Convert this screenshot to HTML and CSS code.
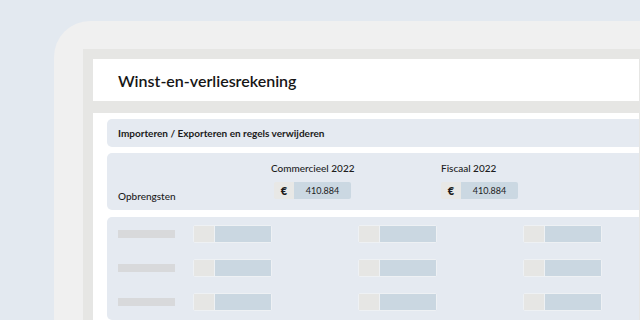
FILE: index.html
```html
<!DOCTYPE html>
<html lang="nl">
<head>
<meta charset="utf-8">
<link rel="stylesheet" href="styles.css">
</head>
<body>
<div class="device">
  <div class="screen">
    <div class="header"><h1 class="title">Winst-en-verliesrekening</h1></div>
    <div class="content">
      <div class="panel panel-bar">Importeren / Exporteren en regels verwijderen</div>
      <div class="panel panel-values">
        <div class="label">Opbrengsten</div>
        <div class="col col-1">
          <div class="col-head">Commercieel 2022</div>
          <div class="money"><span class="cur">€</span><span class="val">410.884</span></div>
        </div>
        <div class="col col-2">
          <div class="col-head">Fiscaal 2022</div>
          <div class="money"><span class="cur">€</span><span class="val">410.884</span></div>
        </div>
      </div>
      <div class="panel panel-skeleton">
        <div class="sk-row">
          <div class="sk-label"></div>
          <div class="sk-input"><span class="sk-cur"></span><span class="sk-val"></span></div>
          <div class="sk-input"><span class="sk-cur"></span><span class="sk-val"></span></div>
          <div class="sk-input"><span class="sk-cur"></span><span class="sk-val"></span></div>
        </div>
        <div class="sk-row">
          <div class="sk-label"></div>
          <div class="sk-input"><span class="sk-cur"></span><span class="sk-val"></span></div>
          <div class="sk-input"><span class="sk-cur"></span><span class="sk-val"></span></div>
          <div class="sk-input"><span class="sk-cur"></span><span class="sk-val"></span></div>
        </div>
        <div class="sk-row">
          <div class="sk-label"></div>
          <div class="sk-input"><span class="sk-cur"></span><span class="sk-val"></span></div>
          <div class="sk-input"><span class="sk-cur"></span><span class="sk-val"></span></div>
          <div class="sk-input"><span class="sk-cur"></span><span class="sk-val"></span></div>
        </div>
      </div>
    </div>
  </div>
</div>
</body>
</html>
```
FILE: styles.css
```css
html, body {
  margin: 0;
  padding: 0;
  width: 640px;
  height: 320px;
  overflow: hidden;
  background: #e3e9f0;
  font-family: "Lato", "Open Sans", sans-serif;
  color: #1c1c1c;
}

.device {
  margin: 21px 0 0 54px;
  height: 299px;
  background: #f0f0f0;
  border-top-left-radius: 36px;
  padding: 28px 0 0 29px;
  box-sizing: border-box;
}

.screen {
  height: 100%;
  background: #e6e6e4;
  padding: 10px 1px 0 10px;
  box-sizing: border-box;
  display: flex;
  flex-direction: column;
  gap: 12px;
}

.header {
  height: 42px;
  background: #ffffff;
  display: flex;
  align-items: center;
  padding-left: 25px;
}

.title {
  margin: 0;
  font-size: 16px;
  font-weight: 600;
  color: #161616;
}

.content {
  flex: 1;
  background: #ffffff;
  padding: 6px 0 0 14px;
  display: flex;
  flex-direction: column;
  gap: 6px;
}

.panel {
  background: #e5eaf1;
  border-radius: 5px 0 0 5px;
}

.panel-bar {
  height: 28px;
  display: flex;
  align-items: center;
  padding-left: 11px;
  font-size: 10px;
  font-weight: 700;
  color: #1a1a1a;
}

.panel-values {
  height: 57px;
  margin-bottom: 1px;
  display: flex;
  align-items: flex-end;
  padding-left: 11px;
  padding-bottom: 11px;
  box-sizing: border-box;
  font-size: 10px;
  font-weight: 500;
}

.label {
  width: 153px;
  line-height: 12px;
  margin-bottom: -3px;
}

.col {
  display: flex;
  flex-direction: column;
  gap: 8px;
}

.col-1 {
  width: 170px;
  align-items: flex-start;
}

.col-1 .money {
  margin-left: 3px;
}

.col-head {
  line-height: 12px;
}

.money {
  display: flex;
  height: 17px;
  border-radius: 2px;
  overflow: hidden;
  font-size: 9px;
  font-weight: 400;
}

.cur {
  width: 20px;
  background: #e8e8e6;
  display: flex;
  align-items: center;
  justify-content: center;
  font-weight: 800;
  font-size: 11px;
}

.val {
  width: 57px;
  background: #cbd8e2;
  display: flex;
  align-items: center;
  justify-content: center;
}

.panel-skeleton {
  flex: 1;
  padding: 8px 0 0 11px;
  display: flex;
  flex-direction: column;
  gap: 16px;
}

.sk-row {
  display: grid;
  grid-template-columns: 75px 165px 165px 79px;
  align-items: center;
  height: 18px;
}

.sk-label {
  width: 57px;
  height: 8px;
  background: #d8d9db;
}

.sk-input {
  display: flex;
  width: 79px;
  height: 18px;
  box-sizing: border-box;
  border: 1px solid #eef1f4;
  border-radius: 2px;
}

.sk-cur {
  width: 20px;
  background: #e6e6e4;
  border-right: 1px solid #eef1f4;
}

.sk-val {
  flex: 1;
  background: #cad7e1;
}
```
